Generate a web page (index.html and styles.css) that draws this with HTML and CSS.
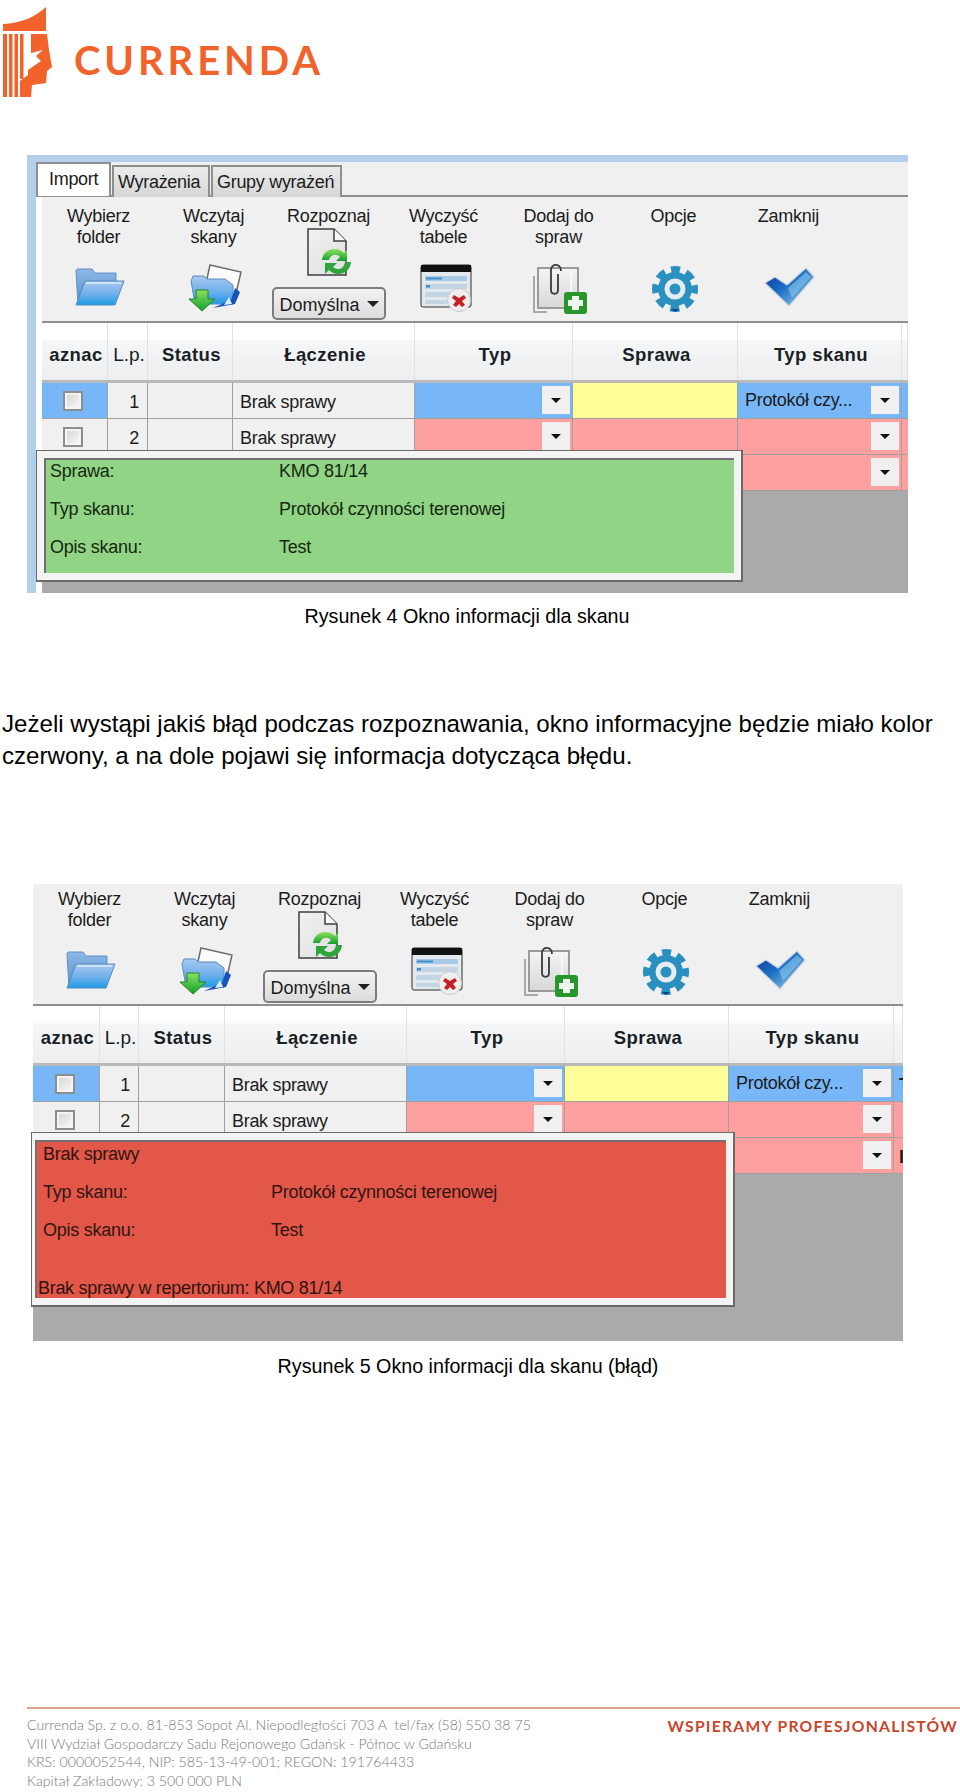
FILE: index.html
```html
<!DOCTYPE html>
<html lang="pl">

<head>
    <meta charset="UTF-8">
    <meta name="viewport" content="width=device-width, initial-scale=1.0">
    <title>Okno informacji dla skanu</title>
    <link rel="stylesheet" href="styles.css">
</head>

<body>
    <!-- shared icons -->
    <svg class="icon-defs" xmlns="http://www.w3.org/2000/svg">
        <defs>
            <linearGradient id="folder-front" x1="0" y1="0" x2="0" y2="1">
                <stop offset="0" stop-color="#a9c8f0" />
                <stop offset="0.55" stop-color="#6fb0ea" />
                <stop offset="1" stop-color="#1f9be6" />
            </linearGradient>
            <linearGradient id="folder-back" x1="0" y1="0" x2="0" y2="1">
                <stop offset="0" stop-color="#8fb8e6" />
                <stop offset="1" stop-color="#4f8fd0" />
            </linearGradient>
            <linearGradient id="green" x1="0" y1="0" x2="0" y2="1">
                <stop offset="0" stop-color="#8ee060" />
                <stop offset="1" stop-color="#12a02c" />
            </linearGradient>
            <linearGradient id="check" x1="0" y1="0" x2="1" y2="1">
                <stop offset="0" stop-color="#0a2f9c" />
                <stop offset="0.45" stop-color="#1d70c4" />
                <stop offset="1" stop-color="#a6daf2" />
            </linearGradient>
            <linearGradient id="paper" x1="0" y1="0" x2="0" y2="1">
                <stop offset="0" stop-color="#f4f4f4" />
                <stop offset="1" stop-color="#d8d8d8" />
            </linearGradient>
            <linearGradient id="sheet" x1="0" y1="0" x2="1" y2="1">
                <stop offset="0" stop-color="#f2f2f2" />
                <stop offset="1" stop-color="#dedede" />
            </linearGradient>

            <symbol id="i-folder" viewBox="0 0 50 38">
                <path d="M3 37 L1 3 Q1 1 3 1 H17 L20 5 H41 V16 H8 Z" fill="url(#folder-back)" stroke="#5f8fc4" />
                <path d="M1 37 L10 13 H49 L40 37 Z" fill="url(#folder-front)" stroke="#5a8cc0" />
                <path d="M11 15 H46" stroke="#dcebfa" stroke-width="1.5" />
            </symbol>

            <symbol id="i-scan" viewBox="0 0 53 48">
                <path d="M21 1 L52 8 L46 34 L15 28 Z" fill="#fbfbfb" stroke="#6d6d6d" stroke-width="1.5" />
                <path d="M2 17 L4 12 H15 L18 15 H36 L44 21 V40 H6 Z" fill="url(#folder-front)" stroke="#5a8cc0" />
                <path d="M24 44 L46 40 L51 28 L46 24 L42 36 Z" fill="#1554b8" />
                <path d="M35 41 L40 33 L43 40 Z" fill="#dcecfa" />
                <path d="M7 26 H19 V35 H26 L13 47 L0 35 H7 Z" fill="url(#green)" stroke="#1a8a2a" />
            </symbol>

            <symbol id="i-doc" viewBox="0 0 45 48">
                <path d="M1 1 H27 L39 13 V47 H1 Z" fill="url(#sheet)" stroke="#3e3e3e" stroke-width="1.5" />
                <path d="M27 1 V13 H39" fill="#fafafa" stroke="#3e3e3e" stroke-width="1.5" />
                <path d="M15 32 C16 20 31 18 37 25 L40 22 V33 H29 L33 29 C29 25 23 27 22 32 Z" fill="url(#green)" />
                <path d="M44 34 C43 47 28 49 22 42 L18 46 V35 H30 L26 39 C31 43 37 41 38 34 Z" fill="#2da53a" />
            </symbol>

            <symbol id="i-table" viewBox="0 0 52 48">
                <rect x="1" y="1" width="50" height="42" rx="2" fill="#e4e9ee" stroke="#2c2c2c" />
                <rect x="1" y="1" width="50" height="7" fill="#111" />
                <rect x="5" y="12" width="42" height="5" fill="#a9c9e6" />
                <rect x="6" y="13.5" width="16" height="2" fill="#3f8ecb" />
                <rect x="5" y="20" width="42" height="5" fill="#c3d6e6" />
                <rect x="6" y="21" width="4" height="2.5" fill="#3f8ecb" />
                <rect x="5" y="28" width="42" height="5" fill="#c3d6e6" />
                <rect x="5" y="36" width="42" height="4" fill="#c3d6e6" />
                <circle cx="39" cy="36" r="11.5" fill="#f0eeee" stroke="#c8c8c8" />
                <path d="M34 31 L39 34 L44 31 L46 34 L42 37 L45 41 L42 43 L39 40 L36 43 L33 41 L36 37 L32 34 Z" fill="#c42026" />
            </symbol>

            <symbol id="i-clip" viewBox="0 0 54 52">
                <path d="M1 14 V50 H14" fill="none" stroke="#a8a8a8" stroke-width="2" />
                <rect x="5" y="6" width="40" height="40" fill="url(#paper)" stroke="#9a9a9a" stroke-width="2" />
                <path d="M38 9 V43" stroke="#f8f8f8" stroke-width="2" />
                <path d="M28 9 C28 1 18 1 18 8 V28 C18 33 25 33 25 28 V12" fill="none" stroke="#3a3a3a" stroke-width="1.8" />
                <rect x="31" y="30" width="23" height="22" rx="3" fill="#27962d" />
                <path d="M39 34 H46 V38 H50 V44 H46 V48 H39 V44 H35 V38 H39 Z" fill="#eef7ee" />
            </symbol>

            <symbol id="i-gear" viewBox="0 0 48 48">
                <circle cx="24" cy="24" r="17" fill="#2a90c0" />
                <circle cx="24" cy="24" r="19.5" fill="none" stroke="#2a90c0" stroke-width="7" stroke-dasharray="9 6.3" stroke-dashoffset="4.5" />
                <circle cx="24" cy="24" r="10.5" fill="#e6edf1" />
                <circle cx="24" cy="24" r="5.5" fill="#2a90c0" />
                <path d="M20 44 H28 L24 47 Z" fill="#163f90" />
            </symbol>

            <symbol id="i-check" viewBox="0 0 51 40">
                <path d="M1 16 L11 10 L23 18 L42 1 L50 10 L25 39 Z" fill="url(#check)" stroke="#c9d3dc" stroke-width="1.2" />
                <path d="M24 21 L42 5 L47 10 L28 31 Z" fill="#8fcdec" opacity="0.55" />
            </symbol>
        </defs>
    </svg>

    <header class="logo">
        <svg class="logo-mark" viewBox="0 0 56 100" xmlns="http://www.w3.org/2000/svg">
            <path d="M3 31 V24 C22 23 35 17 46 7 V31 Z" fill="#f1632a" />
            <rect x="3" y="34" width="4" height="63" fill="#f1632a" />
            <rect x="9" y="34" width="3.5" height="63" fill="#f1632a" />
            <rect x="14.5" y="34" width="3.5" height="63" fill="#f1632a" />
            <rect x="20" y="34" width="3.5" height="45" fill="#f1632a" />
            <path d="M31 34 H47 L49 50 L52 67 L47 71 L46 83 L32 85 L31 97 H20 V81 L28 75 V70 L41 61 L36 56 L43 50 L31 53 Z" fill="#f1632a" />
        </svg>
        <div class="logo-name">CURRENDA</div>
    </header>

    <section class="shot shot-tabs">
        <div class="tabs">
            <div class="tab tab-active">Import</div>
            <div class="tab">Wyrażenia</div>
            <div class="tab">Grupy wyrażeń</div>
        </div>
        <div class="tab-page">
            <div class="toolbar">
                <div class="tool">
                    <div class="tool-label">Wybierz<br>folder</div>
                    <svg class="icon ic-folder"><use href="#i-folder" /></svg>
                </div>
                <div class="tool">
                    <div class="tool-label">Wczytaj<br>skany</div>
                    <svg class="icon ic-scan"><use href="#i-scan" /></svg>
                </div>
                <div class="tool">
                    <div class="tool-label tool-label-single">Rozpoznaj</div>
                    <svg class="icon ic-doc"><use href="#i-doc" /></svg>
                    <div class="combo">Domyślna</div>
                </div>
                <div class="tool">
                    <div class="tool-label">Wyczyść<br>tabele</div>
                    <svg class="icon ic-table"><use href="#i-table" /></svg>
                </div>
                <div class="tool">
                    <div class="tool-label">Dodaj do<br>spraw</div>
                    <svg class="icon ic-clip"><use href="#i-clip" /></svg>
                </div>
                <div class="tool">
                    <div class="tool-label">Opcje</div>
                    <svg class="icon ic-gear"><use href="#i-gear" /></svg>
                </div>
                <div class="tool">
                    <div class="tool-label">Zamknij</div>
                    <svg class="icon ic-check"><use href="#i-check" /></svg>
                </div>
            </div>
            <div class="grid">
                <div class="row row-head">
                    <div class="th">aznac</div>
                    <div class="th th-plain">L.p.</div>
                    <div class="th">Status</div>
                    <div class="th">Łączenie</div>
                    <div class="th">Typ</div>
                    <div class="th">Sprawa</div>
                    <div class="th">Typ skanu</div>
                    <div class="th"></div>
                </div>
                <div class="row">
                    <div class="td td-blue td-check"><span class="checkbox"></span></div>
                    <div class="td td-num">1</div>
                    <div class="td"></div>
                    <div class="td">Brak sprawy</div>
                    <div class="td td-blue td-drop"><span class="drop"></span></div>
                    <div class="td td-yellow"></div>
                    <div class="td td-blue td-drop">Protokół czy...<span class="drop"></span></div>
                    <div class="td td-blue"></div>
                </div>
                <div class="row">
                    <div class="td td-check"><span class="checkbox"></span></div>
                    <div class="td td-num">2</div>
                    <div class="td"></div>
                    <div class="td">Brak sprawy</div>
                    <div class="td td-pink td-drop"><span class="drop"></span></div>
                    <div class="td td-pink"></div>
                    <div class="td td-pink td-drop"><span class="drop"></span></div>
                    <div class="td td-pink"></div>
                </div>
                <div class="row">
                    <div class="td"></div>
                    <div class="td"></div>
                    <div class="td"></div>
                    <div class="td"></div>
                    <div class="td td-pink td-drop"><span class="drop"></span></div>
                    <div class="td td-pink"></div>
                    <div class="td td-pink td-drop"><span class="drop"></span></div>
                    <div class="td td-pink"></div>
                </div>
                <div class="popup">
                    <div class="popup-inner popup-green">
                        <div class="info">
                            <div>Sprawa:</div>
                            <div>KMO 81/14</div>
                            <div>Typ skanu:</div>
                            <div>Protokół czynności terenowej</div>
                            <div>Opis skanu:</div>
                            <div>Test</div>
                        </div>
                    </div>
                </div>
            </div>
        </div>
    </section>

    <p class="caption caption-first">Rysunek 4 Okno informacji dla skanu</p>

    <p class="lead">Jeżeli wystąpi jakiś błąd podczas rozpoznawania, okno informacyjne będzie miało kolor czerwony, a na dole pojawi się informacja dotycząca błędu.</p>

    <section class="shot shot-plain">
        <div class="tab-page">
            <div class="toolbar">
                <div class="tool">
                    <div class="tool-label">Wybierz<br>folder</div>
                    <svg class="icon ic-folder"><use href="#i-folder" /></svg>
                </div>
                <div class="tool">
                    <div class="tool-label">Wczytaj<br>skany</div>
                    <svg class="icon ic-scan"><use href="#i-scan" /></svg>
                </div>
                <div class="tool">
                    <div class="tool-label tool-label-single">Rozpoznaj</div>
                    <svg class="icon ic-doc"><use href="#i-doc" /></svg>
                    <div class="combo">Domyślna</div>
                </div>
                <div class="tool">
                    <div class="tool-label">Wyczyść<br>tabele</div>
                    <svg class="icon ic-table"><use href="#i-table" /></svg>
                </div>
                <div class="tool">
                    <div class="tool-label">Dodaj do<br>spraw</div>
                    <svg class="icon ic-clip"><use href="#i-clip" /></svg>
                </div>
                <div class="tool">
                    <div class="tool-label">Opcje</div>
                    <svg class="icon ic-gear"><use href="#i-gear" /></svg>
                </div>
                <div class="tool">
                    <div class="tool-label">Zamknij</div>
                    <svg class="icon ic-check"><use href="#i-check" /></svg>
                </div>
            </div>
            <div class="grid">
                <div class="row row-head">
                    <div class="th">aznac</div>
                    <div class="th th-plain">L.p.</div>
                    <div class="th">Status</div>
                    <div class="th">Łączenie</div>
                    <div class="th">Typ</div>
                    <div class="th">Sprawa</div>
                    <div class="th">Typ skanu</div>
                    <div class="th"></div>
                </div>
                <div class="row">
                    <div class="td td-blue td-check"><span class="checkbox"></span></div>
                    <div class="td td-num">1</div>
                    <div class="td"></div>
                    <div class="td">Brak sprawy</div>
                    <div class="td td-blue td-drop"><span class="drop"></span></div>
                    <div class="td td-yellow"></div>
                    <div class="td td-blue td-drop">Protokół czy...<span class="drop"></span></div>
                    <div class="td td-blue td-last">T</div>
                </div>
                <div class="row">
                    <div class="td td-check"><span class="checkbox"></span></div>
                    <div class="td td-num">2</div>
                    <div class="td"></div>
                    <div class="td">Brak sprawy</div>
                    <div class="td td-pink td-drop"><span class="drop"></span></div>
                    <div class="td td-pink"></div>
                    <div class="td td-pink td-drop"><span class="drop"></span></div>
                    <div class="td td-pink"></div>
                </div>
                <div class="row">
                    <div class="td"></div>
                    <div class="td"></div>
                    <div class="td"></div>
                    <div class="td"></div>
                    <div class="td td-pink td-drop"><span class="drop"></span></div>
                    <div class="td td-pink"></div>
                    <div class="td td-pink td-drop"><span class="drop"></span></div>
                    <div class="td td-pink td-last">I</div>
                </div>
                <div class="popup">
                    <div class="popup-inner popup-red">
                        <div class="info">
                            <div>Brak sprawy</div>
                            <div></div>
                            <div>Typ skanu:</div>
                            <div>Protokół czynności terenowej</div>
                            <div>Opis skanu:</div>
                            <div>Test</div>
                        </div>
                        <div class="popup-error">Brak sprawy w repertorium: KMO 81/14</div>
                    </div>
                </div>
            </div>
        </div>
    </section>

    <p class="caption caption-second">Rysunek 5 Okno informacji dla skanu (błąd)</p>

    <footer class="footer">
        <div class="footer-address">
            Currenda Sp. z o.o. 81-853 Sopot Al. Niepodległości 703 A &nbsp;tel/fax (58) 550 38 75<br>
            VIII Wydział Gospodarczy Sadu Rejonowego Gdańsk - Północ w Gdańsku<br>
            KRS: 0000052544, NIP: 585-13-49-001; REGON: 191764433<br>
            Kapitał Zakładowy: 3 500 000 PLN
        </div>
        <div class="footer-motto">WSPIERAMY PROFESJONALISTÓW</div>
    </footer>
</body>

</html>
```

FILE: styles.css
```css
* {
    box-sizing: border-box;
}

html,
body {
    height: 1792px;
    overflow: hidden;
}

body {
    font-family: "Liberation Sans", Arial, sans-serif;
    margin: 0;
    padding: 0;
    background: #fff;
    color: #000;
}

.icon-defs {
    display: block;
    width: 0;
    height: 0;
}

/* logo */
.logo {
    display: flex;
    align-items: flex-start;
    height: 155px;
}

.logo-mark {
    width: 56px;
    height: 100px;
    flex: none;
}

.logo-name {
    margin: 33px 0 0 18px;
    font-family: Lato, sans-serif;
    font-size: 40px;
    line-height: 54px;
    font-weight: 700;
    letter-spacing: 3.9px;
    color: #f1632a;
}

/* screenshots */
.shot {
    font-size: 18px;
    color: #1c1c1c;
}

.shot-tabs {
    margin-left: 27px;
    width: 881px;
    padding: 7px 0 0 9px;
    background: #b4cfe9;
}

.shot-plain {
    margin-left: 33px;
    width: 870px;
}

.tabs {
    display: flex;
    height: 35px;
    padding-top: 1px;
    background: #f0f0f0;
    border-bottom: 2px solid #8f8f8f;
}

.tab {
    height: 32px;
    margin: 2px 1px 0 0;
    padding: 0 4px;
    line-height: 31px;
    letter-spacing: -0.3px;
    white-space: nowrap;
    background: linear-gradient(#ececec, #d6d6d6);
    border: 2px solid #8f8f8f;
    border-bottom: 0;
}

.tab:nth-child(2) {
    width: 98px;
}

.tab:nth-child(3) {
    width: 131px;
}

.tab-active {
    width: 75px;
    height: 34px;
    margin-top: -1px;
    padding-left: 11px;
    background: #fff;
    line-height: 31px;
}

.tab-page {
    background: #fff;
}

.shot-tabs .tab-page {
    padding-left: 6px;
}

.toolbar {
    display: grid;
    grid-template-columns: repeat(7, 115px);
    height: 126px;
    padding-top: 9px;
    background: #f0f0f0;
    border-bottom: 2px solid #8f8f8f;
}

.shot-plain .toolbar {
    height: 122px;
    padding-top: 5px;
}

.tool {
    display: flex;
    flex-direction: column;
    align-items: center;
    margin-left: -2px;
}

.tool-label {
    height: 41px;
    line-height: 21px;
    text-align: center;
    letter-spacing: -0.25px;
    white-space: nowrap;
}

.tool-label.tool-label-single {
    height: 20px;
}

.icon {
    display: block;
    flex: none;
}

.ic-folder {
    width: 50px;
    height: 38px;
    margin: 21px 0 0 2px;
}

.ic-scan {
    width: 53px;
    height: 48px;
    margin: 17px 0 0 4px;
}

.ic-doc {
    width: 45px;
    height: 48px;
    margin: 2px 0 0 2px;
}

.ic-table {
    width: 52px;
    height: 48px;
    margin: 17px 0 0 4px;
}

.ic-clip {
    width: 54px;
    height: 52px;
    margin: 15px 0 0 2px;
}

.ic-gear {
    width: 48px;
    height: 48px;
    margin: 18px 0 0 2px;
}

.ic-check {
    width: 51px;
    height: 40px;
    margin: 20px 0 0 2px;
}

.combo {
    position: relative;
    width: 114px;
    height: 33px;
    margin-top: 11px;
    padding-left: 6px;
    line-height: 32px;
    background: linear-gradient(#f2f2f2, #dcdcdc);
    border: 2px solid #7c7c7c;
    border-radius: 5px;
}

.combo::after {
    content: "";
    position: absolute;
    right: 5px;
    top: 12px;
    border-left: 6px solid transparent;
    border-right: 6px solid transparent;
    border-top: 6px solid #222;
}

/* table */
.grid {
    position: relative;
    background: #aaa;
    --cols: 66px 40px 85px 182px 158px 165px 164px 1fr;
}

.shot-tabs .grid {
    height: 270px;
}

.shot-plain .grid {
    height: 335px;
    --cols: 67px 39px 86px 182px 158px 164px 165px 1fr;
}

.row {
    display: grid;
    grid-template-columns: var(--cols);
    height: 36px;
}

.row-head {
    height: 60px;
    background: linear-gradient(#fff 30%, #f5f6f8 31%, #eceef0);
    border-bottom: 3px solid #b9b9b9;
}

.th {
    display: flex;
    align-items: center;
    justify-content: center;
    padding: 6px 0 0 3px;
    font-size: 18.5px;
    font-weight: 700;
    letter-spacing: 0.45px;
    white-space: nowrap;
    color: #1a1f26;
    border-right: 1px solid #e0e2e4;
}

.th-plain {
    font-size: 19px;
    font-weight: 400;
    letter-spacing: 0;
}

.td {
    display: flex;
    align-items: center;
    min-width: 0;
    overflow: hidden;
    padding: 3px 0 0 7px;
    letter-spacing: -0.3px;
    white-space: nowrap;
    background: #f0f0f0;
    border-right: 1px solid #a0a0a0;
    border-bottom: 1px solid #a0a0a0;
}

.td-blue {
    background: #77b7f7;
}

.td-pink {
    background: #ffa0a0;
}

.td-yellow {
    background: #ffff99;
}

.td-check {
    justify-content: center;
    padding: 0 3px 0 0;
}

.td-num {
    justify-content: flex-end;
    padding-right: 8px;
}

.td-drop {
    justify-content: space-between;
    padding: 0 2px 1px 7px;
}

.td-drop > .drop {
    margin-left: auto;
}

.td:last-child {
    padding: 0;
    border-right: 0;
}

.td.td-last {
    padding: 3px 0 0 5px;
    font-weight: 700;
}

.checkbox {
    width: 20px;
    height: 20px;
    background: linear-gradient(135deg, #d4d4d4, #fafafa);
    border: 2px solid #8e8e8e;
    box-shadow: inset 0 0 0 2px #f4f4f4;
}

.drop {
    position: relative;
    flex: none;
    width: 28px;
    height: 28px;
    background: #f0f0f0;
}

.drop::after {
    content: "";
    position: absolute;
    left: 9px;
    top: 12px;
    border-left: 5px solid transparent;
    border-right: 5px solid transparent;
    border-top: 5px solid #111;
}

/* info popup over the table */
.popup {
    position: absolute;
    padding: 7px;
    background: #f4f4f4;
    border: 1px solid #6a6a6a;
    border-width: 1px 2px 2px 1px;
    z-index: 2;
}

.shot-tabs .popup {
    left: -6px;
    top: 127px;
    width: 707px;
    height: 132px;
}

.shot-plain .popup {
    left: -2px;
    top: 126px;
    width: 704px;
    height: 175px;
    padding-left: 3px;
}

.popup-inner {
    display: flex;
    flex-direction: column;
    justify-content: space-between;
    height: 100%;
    border-top: 2px solid #707070;
    border-left: 2px solid #707070;
}

.popup-green {
    background: #92d486;
    color: #15280f;
}

.popup-red {
    background: #e25748;
    color: #2f1512;
}

.info {
    display: grid;
    grid-template-columns: 229px 1fr;
    row-gap: 10px;
    padding-left: 4px;
    line-height: 28px;
    letter-spacing: -0.25px;
}

.popup-green .info {
    margin-top: -3px;
}

.popup-red .info {
    grid-template-columns: 228px 1fr;
    row-gap: 14px;
    padding-left: 6px;
    line-height: 24px;
}

.popup-error {
    padding-left: 1px;
    line-height: 20px;
    letter-spacing: -0.3px;
    white-space: nowrap;
}

/* document text */
.caption {
    margin: 0;
    font-size: 19.7px;
    line-height: 20px;
    text-align: center;
}

.caption-first {
    margin-top: 13px;
    margin-left: -26px;
}

.caption-second {
    margin-top: 15px;
    margin-left: -24px;
}

.lead {
    width: 950px;
    margin: 82px 0 0 2px;
    font-size: 24.1px;
    line-height: 32px;
    height: 176px;
}

.footer {
    display: flex;
    justify-content: space-between;
    margin: 331px 0 0 27px;
    padding-top: 7px;
    border-top: 2px solid #dba48e;
}

.footer-address {
    font-family: Lato, sans-serif;
    font-size: 14.2px;
    font-weight: 300;
    line-height: 18.7px;
    color: #77787a;
}

.footer-motto {
    margin-right: 2px;
    font-family: Lato, sans-serif;
    font-size: 15.7px;
    line-height: 20px;
    font-weight: 700;
    letter-spacing: 1.25px;
    color: #c9452a;
    white-space: nowrap;
}
```
